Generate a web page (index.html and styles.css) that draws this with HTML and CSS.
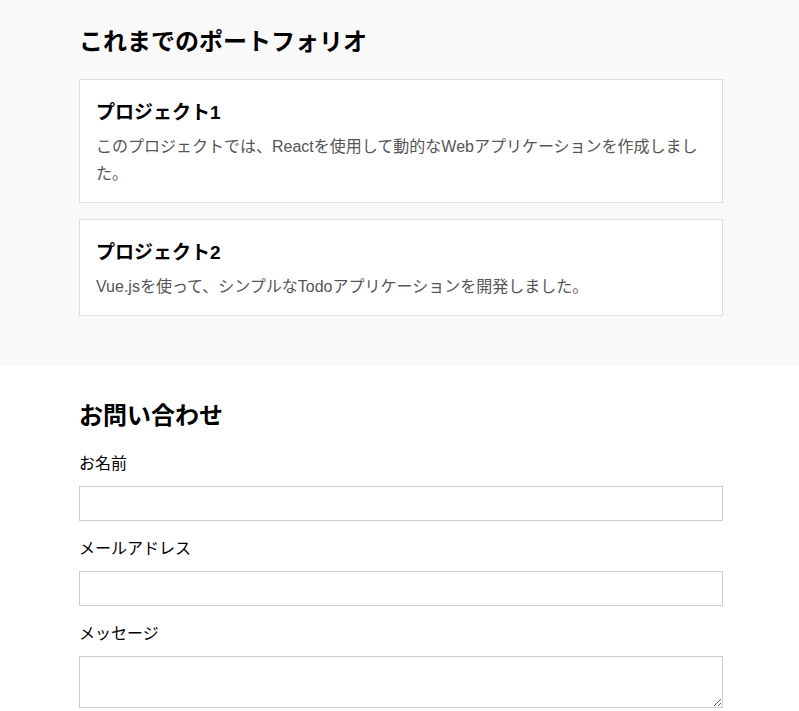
FILE: index.html
```html
<!DOCTYPE html>
<html lang="ja">
<head>
<meta charset="utf-8">
<title>Portfolio</title>
<link rel="stylesheet" href="styles.css">
</head>
<body>
<section class="portfolio">
  <div class="container">
    <h2 class="section-title">これまでのポートフォリオ</h2>
    <div class="card">
      <h3 class="card-title">プロジェクト1</h3>
      <p class="card-text">このプロジェクトでは、Reactを使用して動的なWebアプリケーションを作成しました。</p>
    </div>
    <div class="card">
      <h3 class="card-title">プロジェクト2</h3>
      <p class="card-text">Vue.jsを使って、シンプルなTodoアプリケーションを開発しました。</p>
    </div>
  </div>
</section>
<section class="contact">
  <div class="container">
    <h2 class="section-title contact-title">お問い合わせ</h2>
    <form class="form">
      <label class="label" for="name">お名前</label>
      <input class="field" id="name" type="text">
      <label class="label" for="email">メールアドレス</label>
      <input class="field" id="email" type="email">
      <label class="label" for="msg">メッセージ</label>
      <textarea class="field area" id="msg"></textarea>
    </form>
  </div>
</section>
</body>
</html>
```

FILE: styles.css
```css
* { box-sizing: border-box; }
html, body {
  margin: 0;
  padding: 0;
  background: #fff;
  font-family: "Liberation Sans", "Noto Sans CJK JP", sans-serif;
  color: #000;
}
.container {
  width: 644px;
  margin-left: 79px;
}
.portfolio {
  background: #f9f9f9;
  padding: 24px 0 50px;
}
.section-title {
  margin: 0 0 19px;
  font-size: 24px;
  line-height: 36px;
  font-weight: bold;
}
.card {
  background: #fff;
  border: 1px solid #ddd;
  padding: 19px 16px 15px;
  margin-bottom: 16px;
}
.card:last-child { margin-bottom: 0; }
.card-title {
  margin: 0 0 7px;
  font-size: 19px;
  line-height: 27px;
  font-weight: bold;
}
.card-text {
  margin: 0;
  font-size: 16px;
  line-height: 27px;
  color: #555;
}
.contact {
  padding: 32px 0 0;
}
.contact-title {
  margin-bottom: 18px;
}
.form {
  display: flex;
  flex-direction: column;
}
.label {
  font-size: 16px;
  line-height: 24px;
  margin-bottom: 10px;
}
.field {
  width: 100%;
  height: 35px;
  border: 1px solid #ccc;
  background: #fff;
  margin: 0 0 16px;
  padding: 8px;
  font: inherit;
  border-radius: 0;
}
.area {
  height: 52px;
  margin-bottom: 0;
}
```
